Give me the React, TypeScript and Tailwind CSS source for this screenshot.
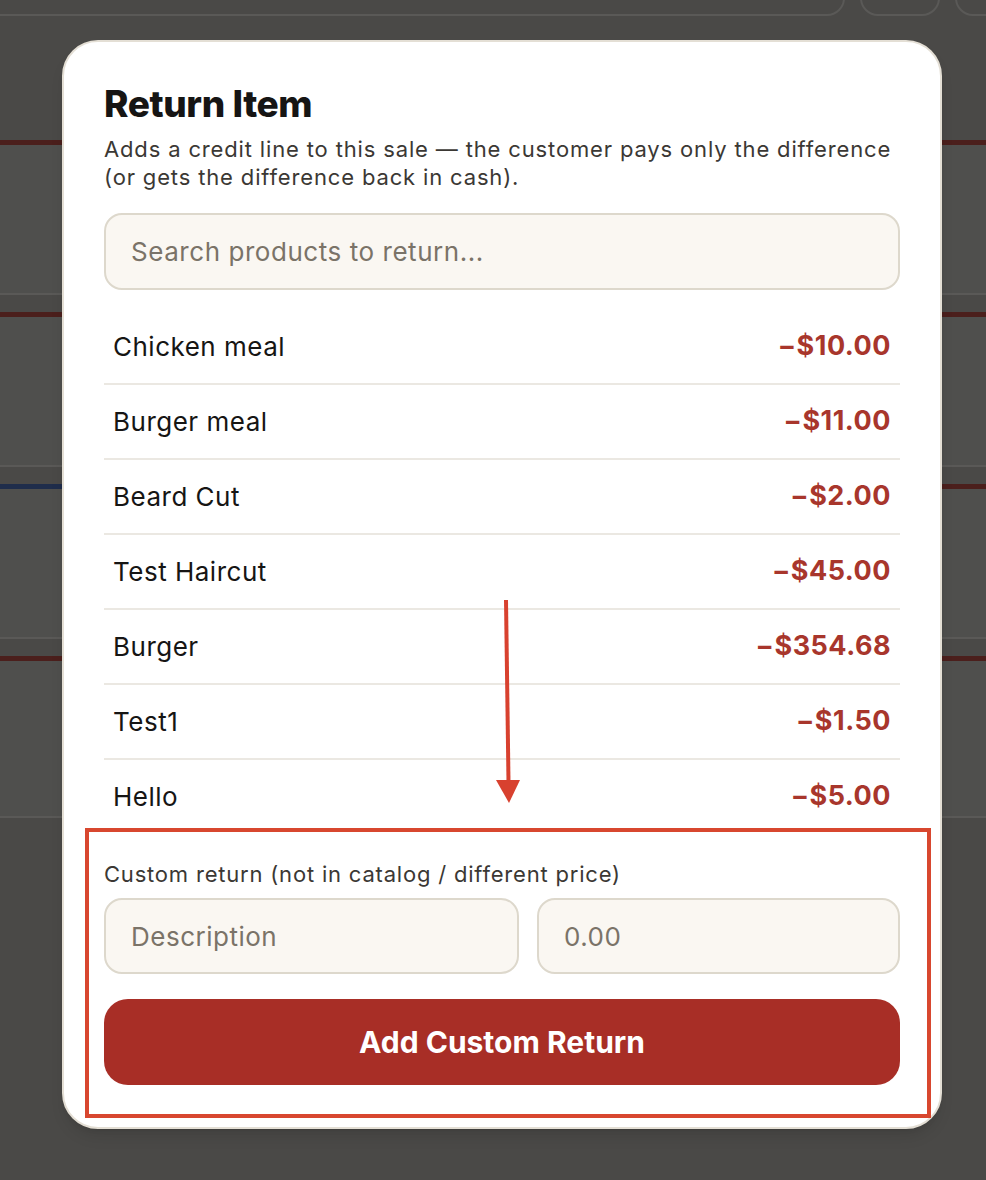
import { useState } from 'react'

const items = [
  { name: 'Chicken meal', price: 10 },
  { name: 'Burger meal', price: 11 },
  { name: 'Beard Cut', price: 2 },
  { name: 'Test Haircut', price: 45 },
  { name: 'Burger', price: 354.68 },
  { name: 'Test1', price: 1.5 },
  { name: 'Hello', price: 5 },
]

const stripes = [
  ['bg-[#4b1f1c]', 'bg-[#4b1f1c]'],
  ['bg-[#4b1f1c]', 'bg-[#4b1f1c]'],
  ['bg-[#1f2d4b]', 'bg-[#4b1f1c]'],
  ['bg-[#4b1f1c]', 'bg-[#4b1f1c]'],
]

export default function App() {
  const [query, setQuery] = useState('')
  const [desc, setDesc] = useState('')
  const [amount, setAmount] = useState('')

  const shown = items.filter((i) => i.name.toLowerCase().includes(query.toLowerCase()))

  return (
    <div className="relative w-[986px] h-[1180px] overflow-hidden bg-[#4a4947] font-['Inter',sans-serif]">
      {/* Dimmed app behind */}
      <div className="flex gap-[15px] -mt-[44px] -ml-[20px]">
        <div className="shrink-0 w-[865px] h-[60px] rounded-b-[18px] border-2 border-[#5a5957]" />
        <div className="shrink-0 w-[80px] h-[60px] rounded-b-[18px] border-2 border-[#5a5957]" />
        <div className="shrink-0 w-[80px] h-[60px] rounded-b-[18px] border-2 border-[#5a5957]" />
      </div>
      <div className="grid grid-cols-2 gap-x-6 gap-y-[17px] w-[1040px] -ml-[30px] mt-[124px]">
        {stripes.map((row, r) =>
          row.map((s, c) => (
            <div
              key={`${r}-${c}`}
              className={`${r === 3 ? 'h-[162px]' : 'h-[155px]'} bg-[#4f4f4d] border-b-2 border-[#5a5957]`}
            >
              <div className={`h-[5px] ${s}`} />
            </div>
          ))
        )}
      </div>

      {/* Modal */}
      <div className="absolute inset-0 pt-[40px] pl-[62px]">
        <div className="relative w-[880px] rounded-[36px] border-2 border-[#e4dfd5] bg-white px-[40px] pt-[40px] pb-[42px] shadow-lg">
          <h2 className="text-[37px] leading-[44px] font-extrabold tracking-[-0.4px] text-[#161514]">Return Item</h2>
          <p className="mt-[9px] text-[22px] leading-[28px] tracking-[0.85px] text-[#3b3834]">
            Adds a credit line to this sale — the customer pays only the difference (or gets the difference back in cash).
          </p>

          <input
            value={query}
            onChange={(e) => setQuery(e.target.value)}
            placeholder="Search products to return..."
            className="mt-[22px] w-full h-[77px] rounded-[18px] border-2 border-[#ddd8cc] bg-[#faf7f2] px-[25px] text-[26px] tracking-[0.55px] text-[#2a2724] placeholder:text-[#7a7368] outline-none"
          />

          <div className="mt-[20px] h-[512px] overflow-hidden">
            {shown.map((i) => (
              <div key={i.name} className="flex items-center justify-between h-[75px] px-[9px] border-b-2 border-[#ebe8e2]">
                <span className="text-[26px] tracking-[0.5px] text-[#161514]">{i.name}</span>
                <span className="text-[27px] tracking-[0.5px] font-bold text-[#a8362c]">−${i.price.toFixed(2)}</span>
              </div>
            ))}
          </div>

          <div className="mt-[38px]">
            <label className="block text-[22px] leading-[28px] tracking-[0.8px] text-[#3b3834]">
              Custom return (not in catalog / different price)
            </label>
            <div className="mt-[10px] flex gap-[18px]">
              <input
                value={desc}
                onChange={(e) => setDesc(e.target.value)}
                placeholder="Description"
                className="w-[415px] h-[76px] rounded-[18px] border-2 border-[#ddd8cc] bg-[#faf7f2] px-[25px] text-[26px] tracking-[0.5px] placeholder:text-[#7a7368] outline-none"
              />
              <input
                value={amount}
                onChange={(e) => setAmount(e.target.value)}
                placeholder="0.00"
                className="flex-1 min-w-0 h-[76px] rounded-[18px] border-2 border-[#ddd8cc] bg-[#faf7f2] px-[25px] text-[26px] tracking-[0.5px] placeholder:text-[#7a7368] outline-none"
              />
            </div>
            <button className="mt-[25px] w-full h-[86px] rounded-[24px] bg-[#a82e26] text-[30px] font-bold text-white">
              Add Custom Return
            </button>
          </div>

          {/* Annotation */}
          <div className="absolute left-[21px] top-[786px] w-[846px] h-[290px] border-4 border-[#d8472f] pointer-events-none" />
          <svg className="absolute left-[420px] top-[555px] pointer-events-none" width="40" height="210" viewBox="0 0 40 210">
            <line x1="22" y1="3" x2="24.5" y2="185" stroke="#d8412f" strokeWidth="4" />
            <polygon points="12,183 36,183 25,206" fill="#d8412f" />
          </svg>
        </div>
      </div>
    </div>
  )
}
